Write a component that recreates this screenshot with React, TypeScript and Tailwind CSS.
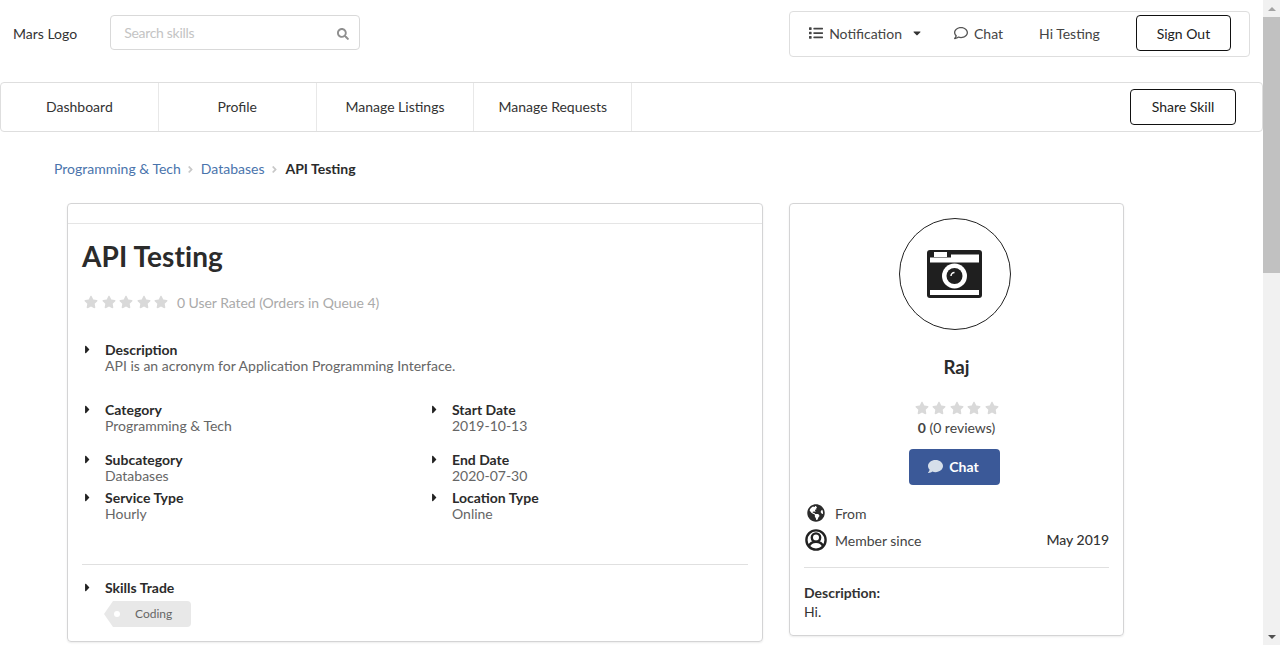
import React from "react";
import {
  FaAngleRight,
  FaCaretDown,
  FaCaretRight,
  FaComment,
  FaGlobeAmericas,
  FaList,
  FaRegComment,
  FaSearch,
  FaStar,
} from "react-icons/fa";

const navItems = ["Dashboard", "Profile", "Manage Listings", "Manage Requests"];

function Stars() {
  return (
    <div className="flex gap-[3.5px] text-[#d9d9d9]">
      {[0, 1, 2, 3, 4].map((i) => (
        <FaStar key={i} size={14} />
      ))}
    </div>
  );
}

function Detail({ label, value, className = "" }: { label: string; value: string; className?: string }) {
  return (
    <div className={`flex ${className}`}>
      <div className="-ml-[1px] w-[24px] pt-[1px] text-[#222]">
        <FaCaretRight size={13} />
      </div>
      <div className="leading-[16px]">
        <div className="font-bold text-[#2b2b2b]">{label}</div>
        <div className="text-[#666]">{value}</div>
      </div>
    </div>
  );
}

function CameraIcon() {
  return (
    <svg width="55" height="48" viewBox="0 0 55 48">
      <rect x="0" y="0" width="55" height="48" rx="3" fill="#1f1f1f" />
      <rect x="7" y="2" width="13" height="5" fill="#fff" />
      <path d="M24 4.500H52V12.500H3V7.500H24Z" fill="#fff" />
      <rect x="3" y="40" width="49" height="5" fill="#fff" />
      <circle cx="27.500" cy="26" r="12.500" fill="#fff" />
      <circle cx="27.500" cy="26" r="8" fill="#1f1f1f" />
      <path d="M24 26a3.500 3.500 0 0 1 3.500-3.500" stroke="#fff" strokeWidth="1.500" fill="none" />
    </svg>
  );
}

function UserCircleIcon() {
  return (
    <svg width="22" height="22" viewBox="0 0 22 22" fill="none" stroke="#222" strokeWidth="2.400">
      <circle cx="11" cy="11" r="9.600" />
      <circle cx="11" cy="8.600" r="4.200" />
      <path d="M3.800 17.500c1-3 3.600-4.600 7.200-4.600s6.200 1.600 7.200 4.600" />
    </svg>
  );
}

export default function App() {
  return (
    <div className="flex h-[645px] w-[1280px] overflow-hidden bg-white font-['Lato',sans-serif] text-[14px] text-[#333]">
      <div className="w-[1263px] shrink-0">
        {/* top bar */}
        <div className="flex h-[82px] items-start">
          <span className="ml-[13px] mt-[25px] leading-[18px] text-[#333]">Mars Logo</span>
          <div className="ml-[33px] mt-[15px] flex h-[35px] w-[250px] items-center justify-between rounded border border-[#d9d9d9] pl-[13px] pr-[10px]">
            <span className="-mt-[1px] tracking-[-0.3px] text-[#c4c4c4]">Search skills</span>
            <FaSearch size={12} className="mt-[3px] text-[#8f8f8f]" />
          </div>
          <div className="ml-[429px] mt-[11px] flex h-[46px] w-[461px] items-center rounded border border-[#dedede] pb-[2px] pl-[19px] text-[#444]">
            <FaList size={14} />
            <span className="ml-[6px]">Notification</span>
            <FaCaretDown size={12} className="ml-[9px] text-[#333]" />
            <FaRegComment size={14} className="ml-[31px] text-[#555]" />
            <span className="ml-[6px]">Chat</span>
            <span className="ml-[36px]">Hi Testing</span>
            <button className="ml-[36px] h-[36px] w-[95px] rounded border border-[#111] text-[#222]">Sign Out</button>
          </div>
        </div>

        {/* menu */}
        <div className="flex h-[50px] items-stretch rounded border border-[#dedede]">
          {navItems.map((item) => (
            <div key={item} className="flex w-[157.8px] items-center justify-center border-r border-[#e8e8e8] pb-[2px] text-[#333]">
              {item}
            </div>
          ))}
          <div className="ml-auto flex items-center pr-[26px]">
            <button className="h-[36px] w-[106px] rounded border border-[#111] pb-[2px] text-[#222]">Share Skill</button>
          </div>
        </div>

        {/* breadcrumb */}
        <div className="ml-[54px] mt-[28px] flex h-[18px] items-center leading-[18px]">
          <span className="text-[#4a74ac]">Programming &amp; Tech</span>
          <span className="flex w-[20px] justify-center text-[#c8c8c8]">
            <FaAngleRight size={11} />
          </span>
          <span className="text-[#4a74ac]">Databases</span>
          <span className="flex w-[21px] justify-center text-[#c8c8c8]">
            <FaAngleRight size={11} />
          </span>
          <span className="font-bold text-[#2b2b2b]">API Testing</span>
        </div>

        <div className="ml-[67px] mt-[25px] flex items-start gap-[26px]">
          {/* listing card */}
          <div className="h-[439px] w-[696px] rounded border border-[#d4d4d5] shadow-[0_1px_2px_rgba(0,0,0,0.08)]">
            <div className="h-[20px] border-b border-[#e5e5e5]" />
            <div className="px-[14px]">
              <h1 className="mt-[14px] text-[28px] font-bold leading-[36px] tracking-[0.1px] text-[#2b2b2b]">API Testing</h1>
              <div className="mt-[19px] flex h-[18px] items-center pl-[2px]">
                <Stars />
                <span className="ml-[9px] tracking-[-0.05px] text-[#aaa]">0 User Rated (Orders in Queue 4)</span>
              </div>
              <div className="mt-[31px]">
                <Detail label="Description" value="API is an acronym for Application Programming Interface." />
              </div>
              <div className="mt-[28px] grid w-[694px] grid-cols-[347px_1fr]">
                <Detail label="Category" value="Programming & Tech" />
                <Detail label="Start Date" value="2019-10-13" />
                <Detail label="Subcategory" value="Databases" className="mt-[18px]" />
                <Detail label="End Date" value="2020-07-30" className="mt-[18px]" />
                <Detail label="Service Type" value="Hourly" className="mt-[6px]" />
                <Detail label="Location Type" value="Online" className="mt-[6px]" />
              </div>
              <div className="mt-[42px] border-t border-[#e0e0e0]" />
              <div className="mt-[15px] flex">
                <div className="-ml-[1px] w-[24px] pt-[1px] text-[#222]">
                  <FaCaretRight size={13} />
                </div>
                <div className="font-bold leading-[16px] text-[#2b2b2b]">Skills Trade</div>
              </div>
              <div className="relative ml-[22px] mt-[5px] flex h-[26px] w-[87px] items-center rounded-r bg-[#e8e8e8] pl-[31px] text-[12px] text-[#666] [clip-path:polygon(0_50%,9px_0,100%_0,100%_100%,9px_100%)]">
                Coding
                <span className="absolute left-[10px] top-[10px] h-[6px] w-[6px] rounded-full bg-white" />
              </div>
            </div>
          </div>

          {/* seller card */}
          <div className="flex h-[433px] w-[335px] flex-col items-center rounded border border-[#d4d4d5] px-[14px] shadow-[0_1px_2px_rgba(0,0,0,0.08)]">
            <div className="mr-[4px] mt-[14px] flex h-[112px] w-[112px] shrink-0 items-center justify-center rounded-full border border-[#222]">
              <CameraIcon />
            </div>
            <div className="mt-[25px] text-[18.7px] font-bold leading-[24px] text-[#2b2b2b]">Raj</div>
            <div className="mt-[22px]">
              <Stars />
            </div>
            <div className="mt-[4px] leading-[18px] text-[#444]">
              <span className="font-bold">0</span> (0 reviews)
            </div>
            <button className="mr-[4px] mt-[12px] flex h-[36px] w-[91px] items-center justify-center gap-[6px] rounded bg-[#3b5998] pb-[1px] pr-[2px] font-bold text-white">
              <FaComment size={15} className="text-[#d6dfea]" />
              Chat
            </button>
            <div className="mt-[19px] flex h-[18px] w-full items-center">
              <FaGlobeAmericas size={18} className="ml-[3px] text-[#2b2b2b]" />
              <span className="ml-[10px] text-[#444]">From</span>
            </div>
            <div className="mt-[7px] flex h-[22px] w-full items-center">
              <div className="ml-[1px] flex">
                <UserCircleIcon />
              </div>
              <span className="ml-[8px] text-[#444]">Member since</span>
              <span className="-mt-[2px] ml-auto font-medium text-[#333]">May 2019</span>
            </div>
            <div className="mt-[16px] w-full border-t border-[#e0e0e0]" />
            <div className="mt-[16px] w-full font-bold leading-[18px] text-[#333]">Description:</div>
            <div className="mt-[1px] w-full leading-[18px] text-[#333]">Hi.</div>
          </div>
        </div>
      </div>

      {/* page scrollbar */}
      <div className="flex h-full w-[17px] flex-col bg-[#f1f1f1]">
        <div className="flex h-[17px] items-center justify-center">
          <div className="h-0 w-0 border-x-[4px] border-b-[4px] border-x-transparent border-b-[#a3a3a3]" />
        </div>
        <div className="h-[256px] bg-[#c1c1c1]" />
        <div className="mt-auto flex h-[17px] items-center justify-center">
          <div className="h-0 w-0 border-x-[4px] border-t-[4px] border-x-transparent border-t-[#505050]" />
        </div>
      </div>
    </div>
  );
}
